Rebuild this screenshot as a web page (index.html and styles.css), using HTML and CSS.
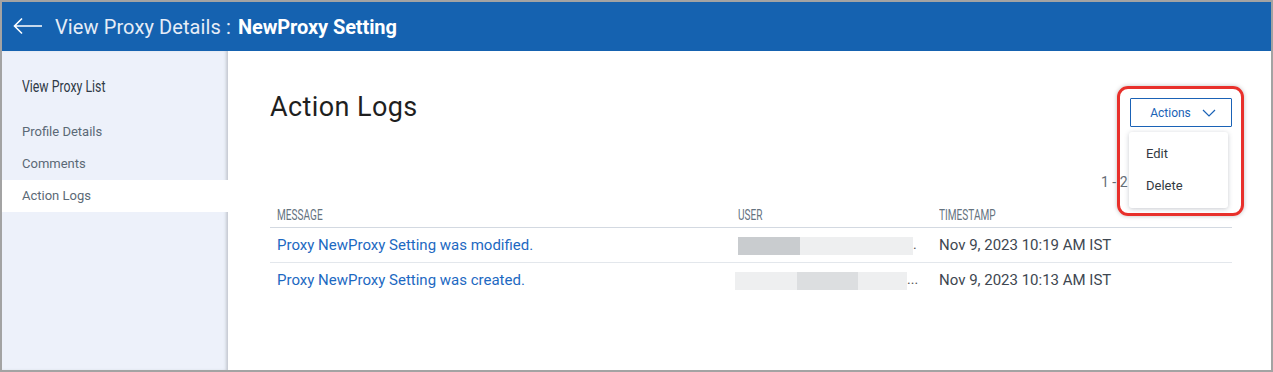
FILE: index.html
```html
<!DOCTYPE html>
<html lang="en">
<head>
    <meta charset="UTF-8">
    <meta name="viewport" content="width=device-width, initial-scale=1.0">
    <title>View Proxy Details</title>
    <link rel="stylesheet" href="styles.css">
</head>
<body>
    <div class="frame">
        <header class="topbar">
            <svg class="back-arrow" width="30" height="18" viewBox="0 0 30 18">
                <path d="M29 9H2M9 1.5L1.5 9L9 16.5" fill="none" stroke="#fff" stroke-width="1.6"/>
            </svg>
            <h1><span class="crumb">View Proxy Details :</span> <strong>NewProxy Setting</strong></h1>
        </header>

        <div class="main">
            <nav class="sidebar">
                <div class="side-title"><span class="narrow">View Proxy List</span></div>
                <a class="side-link">Profile Details</a>
                <a class="side-link">Comments</a>
                <a class="side-link active">Action Logs</a>
            </nav>

            <section class="content">
                <div class="title-row">
                    <h2>Action Logs</h2>
                    <div class="actions">
                        <button type="button" class="actions-btn">
                            Actions
                            <svg width="14" height="8" viewBox="0 0 14 8">
                                <path d="M1 1l6 6 6-6" fill="none" stroke="#1a62b6" stroke-width="1.2"/>
                            </svg>
                        </button>
                        <ul class="menu">
                            <li>Edit</li>
                            <li>Delete</li>
                        </ul>
                        <div class="highlight"></div>
                    </div>
                </div>

                <div class="pager"><span class="pager-text">1 - 2 of 2</span></div>

                <table class="logs">
                    <thead>
                        <tr>
                            <th class="col-msg"><span class="narrow">MESSAGE</span></th>
                            <th class="col-user"><span class="narrow">USER</span></th>
                            <th><span class="narrow">TIMESTAMP</span></th>
                        </tr>
                    </thead>
                    <tbody>
                        <tr>
                            <td><a>Proxy NewProxy Setting was modified.</a></td>
                            <td>
                                <span class="blur">
                                    <i class="b-dark" style="width: 62px"></i><i class="b-light" style="width: 113px"></i>
                                </span><span class="dots">.</span>
                            </td>
                            <td class="time">Nov 9, 2023 10:19 AM IST</td>
                        </tr>
                        <tr>
                            <td><a>Proxy NewProxy Setting was created.</a></td>
                            <td>
                                <span class="blur shift">
                                    <i class="b-light" style="width: 62px"></i><i class="b-mid" style="width: 61px"></i><i class="b-light" style="width: 49px"></i>
                                </span><span class="dots">...</span>
                            </td>
                            <td class="time">Nov 9, 2023 10:13 AM IST</td>
                        </tr>
                    </tbody>
                </table>
            </section>
        </div>
    </div>
</body>
</html>
```

FILE: styles.css
```css
body {
    margin: 0;
    font-family: Roboto, "Liberation Sans", sans-serif;
    background-color: #fff;
}

.frame {
    height: 372px;
    box-sizing: border-box;
    border: 2px solid #a3a3a3;
    display: flex;
    flex-direction: column;
    overflow: hidden;
}

.topbar {
    height: 49px;
    flex-shrink: 0;
    background-color: #1562b0;
    display: flex;
    align-items: center;
    padding-left: 11px;
}

.back-arrow {
    margin-top: -2px;
}

.topbar h1 {
    margin: 0 0 0 12px;
    font-size: 20px;
    font-weight: 400;
    color: #e6edf7;
    letter-spacing: 0.1px;
}

.topbar strong {
    color: #fff;
    font-weight: 700;
    margin-left: 2px;
    letter-spacing: -0.1px;
}

.main {
    flex: 1;
    display: flex;
}

/* condensed look for labels (no narrow face installed) */
.narrow {
    display: inline-block;
    transform-origin: left center;
}

.sidebar {
    width: 226px;
    background-color: #edf1fa;
    box-shadow: inset -3px 0 3px -1px #c4c9d1;
    display: flex;
    flex-direction: column;
    padding-top: 26px;
}

.side-title {
    font-size: 16px;
    color: #2f3a46;
    padding-left: 20px;
    height: 20px;
    line-height: 20px;
    margin-bottom: 19px;
    white-space: nowrap;
}

.side-title .narrow {
    transform: scaleX(0.77);
}

.side-link {
    display: block;
    font-size: 13px;
    color: #5b6976;
    padding-left: 20px;
    height: 32px;
    line-height: 32px;
}

.side-link.active {
    background-color: #fff;
    margin-right: -3px;
    position: relative;
}

.content {
    flex: 1;
    padding: 0 39px 0 42px;
}

.title-row {
    display: flex;
    justify-content: space-between;
    align-items: flex-start;
    padding-top: 39px;
}

.title-row h2 {
    margin: 0;
    font-size: 27px;
    font-weight: 400;
    letter-spacing: 0.4px;
    color: #1f1f1f;
    line-height: 34px;
}

.actions {
    position: relative;
    margin-top: 8px;
}

.actions-btn {
    width: 102px;
    height: 29px;
    border: 1px solid #1a62b6;
    border-radius: 1px;
    background-color: #fff;
    color: #1a62b6;
    font-family: Roboto, sans-serif;
    font-size: 12px;
    display: flex;
    align-items: center;
    justify-content: center;
    gap: 11px;
    padding: 0 0 0 4px;
}

.menu {
    position: absolute;
    top: 34px;
    left: -1px;
    width: 99px;
    margin: 0;
    padding: 6px 0;
    list-style: none;
    background-color: #fff;
    border-radius: 3px;
    box-shadow: 0 1px 5px rgba(60, 70, 90, 0.28);
    z-index: 2;
}

.menu li {
    font-size: 13px;
    color: #333a42;
    padding-left: 17px;
    height: 32px;
    line-height: 32px;
}

.highlight {
    position: absolute;
    top: -12px;
    left: -13px;
    width: 121px;
    height: 124px;
    border: 3px solid #e8302b;
    border-radius: 11px;
    box-shadow: 0 0 4px rgba(0, 0, 0, 0.25);
    z-index: 3;
}

.pager {
    display: flex;
    justify-content: flex-end;
    font-size: 14px;
    color: #666e76;
    padding-right: 103px;
    margin-top: 45px;
    height: 20px;
    line-height: 20px;
}

/* the open menu hides the rest of the range */
.pager-text {
    width: 28px;
    overflow: hidden;
    white-space: nowrap;
}

.logs {
    width: 100%;
    border-collapse: collapse;
    margin-top: 10px;
}

.logs th {
    text-align: left;
    font-weight: 400;
    font-size: 14px;
    color: #65737f;
    padding: 0 0 0 7px;
    height: 25px;
    border-bottom: 1px solid #d3d9e1;
    white-space: nowrap;
}

.logs th .narrow {
    transform: scaleX(0.72);
}

.logs th.col-msg {
    width: 453px;
}

.logs th.col-user {
    width: 194px;
    padding-left: 8px;
}

.logs td {
    height: 34px;
    padding: 0 0 0 7px;
    font-size: 15px;
    vertical-align: middle;
}

.logs tbody tr:first-child td {
    border-bottom: 1px solid #e3e7ec;
}

.logs td a {
    color: #1d69c2;
}

.blur {
    display: inline-flex;
    height: 18px;
    vertical-align: middle;
    margin-left: 1px;
}

.blur.shift {
    margin-left: -2px;
}

.blur i {
    display: block;
    height: 18px;
}

.b-dark {
    background-color: #c9cccf;
}

.b-mid {
    background-color: #dcdee0;
}

.b-light {
    background-color: #eeeff0;
}

.dots {
    color: #555;
    font-size: 14px;
}

.time {
    color: #3e4751;
}
```
